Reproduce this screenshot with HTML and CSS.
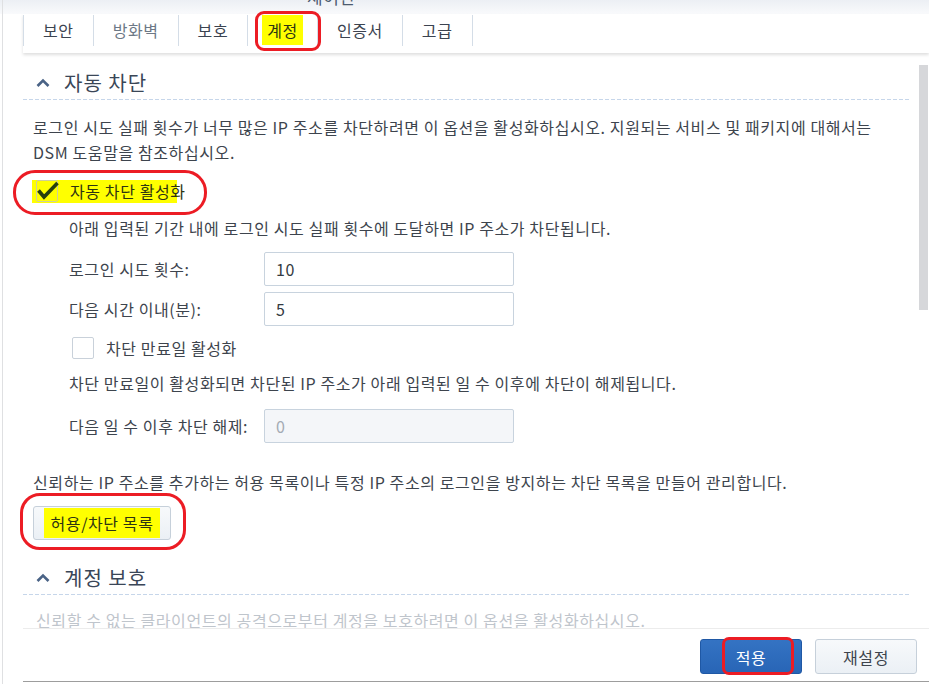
FILE: index.html
```html
<!DOCTYPE html>
<html>
<head>
    <meta name="viewport" content="width=device-width, initial-scale=1">
    <title>계정</title>
    <link rel="stylesheet" href="styles.css">
</head>
<body>
    <div class="window">
        <div class="titlebar"><span class="title">제어판</span></div>

        <div class="tabs">
            <div class="tab">보안</div>
            <div class="tab dim">방화벽</div>
            <div class="tab">보호</div>
            <div class="tab active"><span class="hl">계정</span></div>
            <div class="tab">인증서</div>
            <div class="tab">고급</div>
        </div>

        <div class="main">
            <div class="body">
                <div class="section-head">
                    <svg width="14" height="9" viewBox="0 0 14 9"><polyline points="1.5,8 7,2.5 12.5,8" fill="none" stroke="#4a6386" stroke-width="2.6"/></svg>
                    자동 차단
                </div>
                <p class="desc">로그인 시도 실패 횟수가 너무 많은 IP 주소를 차단하려면 이 옵션을 활성화하십시오. 지원되는 서비스 및 패키지에 대해서는<br>DSM 도움말을 참조하십시오.</p>

                <div class="check-row">
                    <span class="hl-check">
                        <span class="box checked">
                            <svg width="24" height="20" viewBox="0 0 24 20"><polyline points="2.5,9.5 8,16 21.5,2" fill="none" stroke="#27400e" stroke-width="3.6"/></svg>
                        </span>
                        <span class="check-label">자동 차단 활성화</span>
                    </span>
                </div>

                <div class="indent">
                    <p class="hint">아래 입력된 기간 내에 로그인 시도 실패 횟수에 도달하면 IP 주소가 차단됩니다.</p>
                    <div class="field first">
                        <span class="label">로그인 시도 횟수:</span>
                        <input type="text" value="10">
                    </div>
                    <div class="field">
                        <span class="label">다음 시간 이내(분):</span>
                        <input type="text" value="5">
                    </div>
                    <div class="check-row small">
                        <span class="box"></span>
                        <span class="check-label">차단 만료일 활성화</span>
                    </div>
                    <p class="hint second">차단 만료일이 활성화되면 차단된 IP 주소가 아래 입력된 일 수 이후에 차단이 해제됩니다.</p>
                    <div class="field third">
                        <span class="label">다음 일 수 이후 차단 해제:</span>
                        <input type="text" value="0" disabled>
                    </div>
                </div>

                <p class="desc note">신뢰하는 IP 주소를 추가하는 허용 목록이나 특정 IP 주소의 로그인을 방지하는 차단 목록을 만들어 관리합니다.</p>
                <button class="btn list-btn"><span class="hl">허용/차단 목록</span></button>

                <div class="section-head second">
                    <svg width="14" height="9" viewBox="0 0 14 9"><polyline points="1.5,8 7,2.5 12.5,8" fill="none" stroke="#4a6386" stroke-width="2.6"/></svg>
                    계정 보호
                </div>
                <p class="faded">신뢰할 수 없는 클라이언트의 공격으로부터 계정을 보호하려면 이 옵션을 활성화하십시오.</p>
            </div>
            <div class="scrollbar"><div class="thumb"></div></div>
        </div>

        <div class="footer">
            <button class="btn primary">적용</button>
            <button class="btn">재설정</button>
        </div>

        <!-- red annotation marks -->
        <div class="mark mark-tab"></div>
        <div class="mark mark-check"></div>
        <div class="mark mark-list"></div>
        <div class="mark mark-apply"></div>
    </div>
</body>
</html>
```

FILE: styles.css
```css
body {
    margin: 0;
    padding: 0;
    background: #fff;
    font-family: "Noto Sans CJK KR", "Noto Sans", sans-serif;
    font-size: 16px;
    letter-spacing: 0.6px;
    color: #3d444d;
}

p {
    margin: 0;
}

.window {
    position: relative;
    width: 929px;
    height: 684px;
    overflow: hidden;
    display: flex;
    flex-direction: column;
    background: #fff;
}

.window::before {
    content: "";
    position: absolute;
    left: 2px;
    top: 0;
    bottom: 0;
    width: 1px;
    background: #dfe0e2;
}

.titlebar {
    flex: none;
    height: 14px;
    overflow: hidden;
    background: linear-gradient(#eceff4, #f9fafc);
}

.title {
    display: block;
    margin: -13px 0 0 307px;
    line-height: 20px;
    font-size: 17px;
    color: #4d5b6f;
}

/* tabs */
.tabs {
    flex: none;
    display: flex;
    height: 39px;
    margin-left: 23px;
    background: #fff;
    box-shadow: 0 2px 3px rgba(0,0,0,0.13);
    position: relative;
    z-index: 1;
}

.tab {
    height: 31px;
    line-height: 31px;
    margin-top: 1px;
    padding: 0 19px;
    border-left: 1px solid #d4dde7;
    color: #3b4350;
}

.tab:last-child {
    border-right: 1px solid #d4dde7;
}

.tab.dim {
    color: #6c7886;
}

.tab .hl {
    background: #ffff00;
    padding: 3px 5px;
    margin: 0 -5px;
    color: #2e3412;
}

/* main scroll area */
.main {
    flex: none;
    height: 575px;
    display: flex;
    overflow: hidden;
}

.body {
    flex: 1;
    padding-left: 23px;
    padding-right: 9px;
}

.scrollbar {
    width: 9px;
    margin-right: 1px;
}

.thumb {
    margin-top: 12px;
    height: 245px;
    background: #d6d7da;
}

.section-head {
    display: flex;
    align-items: center;
    height: 26px;
    margin-top: 16px;
    padding-bottom: 5px;
    font-size: 20px;
    letter-spacing: 1px;
    color: #3a4657;
    background: linear-gradient(to right, #c6d6ea 4px, transparent 4px) left bottom / 6px 1px repeat-x;
}

.section-head svg {
    margin: 1px 14px 0 13px;
}

.section-head.second {
    margin-top: 24px;
}

.desc {
    margin: 15px 0 0 10px;
    line-height: 25px;
}

.desc.note {
    margin-top: 27px;
}

/* checkboxes */
.check-row {
    display: flex;
    align-items: center;
    height: 26px;
    margin-top: 13px;
}

.hl-check {
    display: flex;
    align-items: center;
    width: 145px;
    height: 23px;
    margin-left: 9px;
    padding-left: 4px;
    box-sizing: border-box;
    background: #ffff00;
    white-space: nowrap;
}

.box {
    flex: none;
    width: 22px;
    height: 22px;
    box-sizing: border-box;
    border: 1px solid #c9d1da;
    border-radius: 2px;
    background: #fff;
}

.box.checked {
    border-color: #cfcf9a;
    background: transparent;
}

.box svg {
    display: block;
    margin: 0 0 0 -1px;
    overflow: visible;
}

.check-label {
    margin-left: 12px;
    color: #2e3412;
}

.check-row.small {
    margin: 9px 0 0 3px;
}

.check-row.small .check-label {
    color: #3d444d;
}

/* indented block */
.indent {
    margin-left: 46px;
}

.hint {
    margin-top: 12px;
    line-height: 25px;
}

.hint.second {
    margin-top: 10px;
}

.field {
    display: flex;
    align-items: center;
    margin-top: 6px;
}

.field.first {
    margin-top: 11px;
}

.field.third {
    margin-top: 13px;
}

.label {
    width: 195px;
}

input {
    width: 250px;
    height: 34px;
    box-sizing: border-box;
    border: 1px solid #c8d3de;
    border-radius: 2px;
    padding: 0 11px;
    font: inherit;
    letter-spacing: 0.6px;
    color: #343a42;
    background: #fff;
}

input:disabled {
    background: #f4f6f9;
    color: #a3aab3;
}

/* buttons */
.btn {
    height: 34px;
    border: 1px solid #c6d0da;
    border-radius: 3px;
    background: linear-gradient(#f7f9fb, #ebf0f5);
    font: inherit;
    letter-spacing: 0.6px;
    color: #3d444d;
    padding: 0;
}

.list-btn {
    width: 138px;
    margin: 11px 0 0 10px;
}

.list-btn .hl {
    background: #ffff00;
    padding: 3px 7px;
    color: #2e3412;
}

.faded {
    margin: 13px 0 0 13px;
    line-height: 25px;
    color: #bfc5cc;
}

/* footer */
.footer {
    flex: none;
    height: 54px;
    margin-left: 23px;
    box-sizing: border-box;
    padding: 10px 12px 0 0;
    display: flex;
    justify-content: flex-end;
    align-items: flex-start;
    gap: 13px;
    border-top: 1px solid #ececec;
    border-bottom: 1px solid #9d9d9d;
    background: #fff;
    position: relative;
}

.footer .btn {
    width: 102px;
    height: 35px;
}

.btn.primary {
    background: linear-gradient(#3473c3, #2865b6);
    border-color: #1f58a5;
    color: #fff;
}

/* red annotations */
.mark {
    position: absolute;
    box-sizing: border-box;
    border: 3px solid #ec1c24;
    pointer-events: none;
    z-index: 5;
}

.mark-tab {
    left: 255px;
    top: 11px;
    width: 66px;
    height: 40px;
    border-radius: 9px;
}

.mark-check {
    left: 13px;
    top: 170px;
    width: 194px;
    height: 45px;
    border-radius: 22px;
}

.mark-list {
    left: 20px;
    top: 493px;
    width: 166px;
    height: 57px;
    border-radius: 20px;
}

.mark-apply {
    left: 722px;
    top: 637px;
    width: 72px;
    height: 38px;
    border-radius: 7px;
}
```
